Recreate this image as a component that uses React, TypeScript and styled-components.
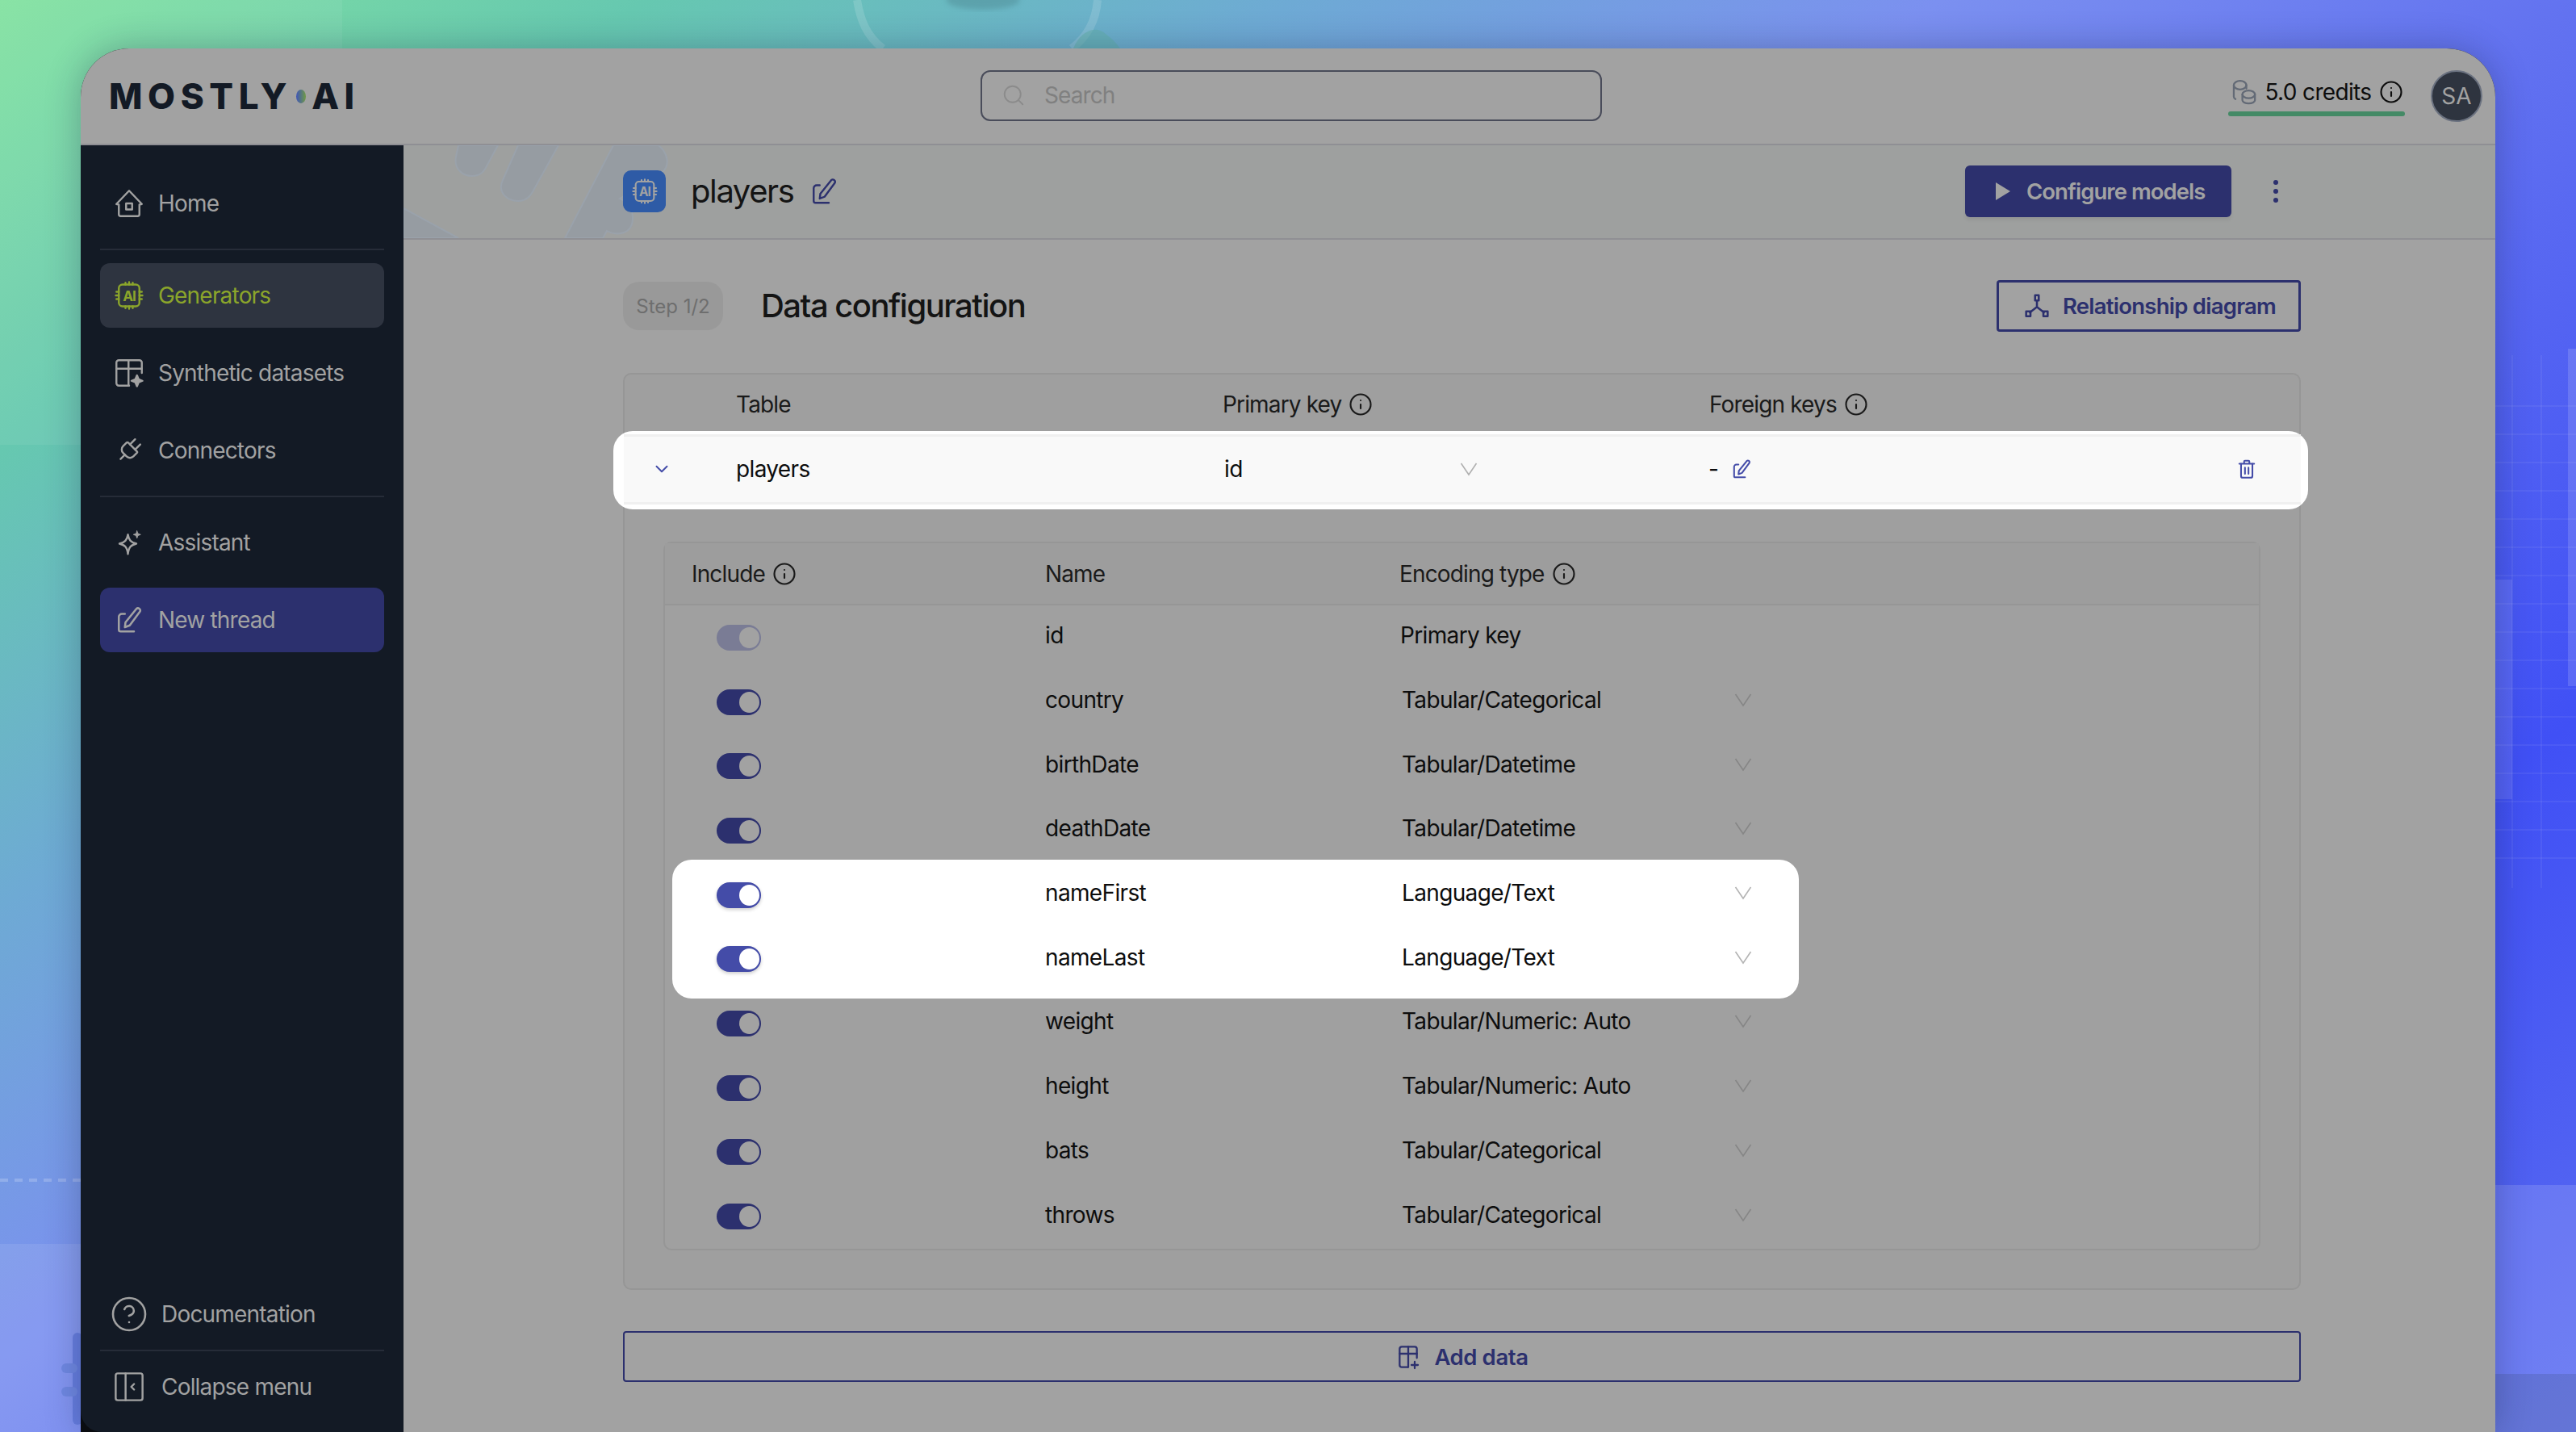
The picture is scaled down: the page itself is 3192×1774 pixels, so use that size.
import React from "react";
import styled, { createGlobalStyle } from "styled-components";
import { ChevronDown, CircleHelp, Info, Plug, Search } from "lucide-react";

const colors = {
  dim: "#a2a2a2",
  dimStrip: "#9ea09f",
  dimCard: "#9f9f9f",
  line: "#8f8f94",
  cardLine: "#969696",
  navy: "#2c306e",
  indigo: "#444ca8",
  sidebar: "#131a25",
  ink: "#141414",
};

const GlobalStyle = createGlobalStyle`
  html, body { margin: 0; padding: 0; }
  body {
    width: 3192px;
    height: 1774px;
    overflow: hidden;
    font-family: "Inter", "Liberation Sans", sans-serif;
    font-size: 28px;
    letter-spacing: -0.65px;
    color: ${colors.ink};
  }
  * { box-sizing: border-box; }
`;

const Page = styled.div`
  position: relative;
  width: 3192px;
  height: 1774px;
  padding: 60px 100px 0;
  background: linear-gradient(145deg, #82e2a0 0%, #66c8b0 14%, #6eaad4 28%, #7b90f0 42%, #6272f0 56%, #4050f5 78%, #5a6cf0 100%);
`;

const BackdropArt = styled.svg`
  position: absolute;
  inset: 0;
`;

const Window = styled.div`
  position: relative;
  width: 2992px;
  height: 1714px;
  display: flex;
  flex-direction: column;
  border-radius: 60px 60px 0 0;
  overflow: hidden;
  background: #0a0c10;
`;

const WindowShadow = styled.div`
  position: absolute;
  left: 100px;
  top: 60px;
  width: 2992px;
  height: 1714px;
  border-radius: 60px 60px 0 0;
  box-shadow: 0 0 44px rgba(20, 30, 60, 0.3);
`;

const TopBar = styled.header`
  height: 120px;
  flex: none;
  display: grid;
  grid-template-columns: 1115px 770px 1fr;
  align-items: center;
  background: ${colors.dim};
  border-bottom: 2px solid ${colors.line};
`;

const Logo = styled.div`
  display: flex;
  align-items: center;
  padding-left: 35px;
  font-size: 44px;
  line-height: 44px;
  font-weight: 800;
  letter-spacing: 6.6px;
  color: ${colors.sidebar};
`;

const LogoDot = styled.span`
  width: 12px;
  height: 17px;
  margin: 0 7px 0 5px;
  border-radius: 50%;
  background: linear-gradient(90deg, #3f55b8, #6f9a45);
`;

const SearchBox = styled.div`
  height: 63px;
  margin-top: -2px;
  display: flex;
  align-items: center;
  gap: 23px;
  padding-left: 24px;
  border: 2px solid #494c5a;
  border-radius: 12px;
  color: #808080;
  letter-spacing: -0.9px;
  svg { color: #8b8b8b; }
`;

const TopRight = styled.div`
  display: flex;
  justify-content: flex-end;
  align-items: center;
  gap: 32px;
  padding-right: 16px;
`;

const Credits = styled.div`
  width: 219px;
  display: flex;
  flex-direction: column;
  gap: 6px;
  margin-top: 2px;
`;

const CreditsRow = styled.div`
  height: 36px;
  display: flex;
  align-items: center;
  justify-content: space-between;
  padding: 0 2px;
  white-space: nowrap;
  font-size: 28px;
  color: #0d0d0d;
`;

const CoinsWrap = styled.span`
  display: flex;
  color: #636a76;
`;

const CreditsBar = styled.div`
  height: 6px;
  border-radius: 3px;
  background: #448a66;
`;

const Avatar = styled.div`
  width: 64px;
  height: 64px;
  display: flex;
  align-items: center;
  justify-content: center;
  border-radius: 50%;
  background: #2e343f;
  border: 2px solid #6b7280;
  color: ${colors.dim};
  font-size: 28px;
  letter-spacing: 0;
`;

const Body = styled.div`
  flex: 1;
  min-height: 0;
  display: flex;
`;

const Sidebar = styled.aside`
  width: 400px;
  flex: none;
  display: flex;
  flex-direction: column;
  gap: 16px;
  padding: 32px 24px 12px;
  background: ${colors.sidebar};
  border-bottom-left-radius: 26px;
  letter-spacing: -0.8px;
`;

const NavItem = styled.div<{ $tone?: "active" | "action" }>`
  height: 80px;
  flex: none;
  display: flex;
  align-items: center;
  gap: 18px;
  padding-left: 18px;
  border-radius: 12px;
  white-space: nowrap;
  color: ${({ $tone }) => ($tone === "active" ? "#8ba52b" : colors.dim)};
  background: ${({ $tone }) =>
    $tone === "active" ? "#2e3440" : $tone === "action" ? colors.navy : "transparent"};
`;

const NavDivider = styled.div`
  height: 2px;
  flex: none;
  background: #262c38;
`;

const SidebarFooter = styled.div`
  margin-top: auto;
  display: flex;
  flex-direction: column;
`;

const FooterItem = styled.div`
  height: 88px;
  display: flex;
  align-items: center;
  gap: 16px;
  padding-left: 12px;
  white-space: nowrap;
  color: ${colors.dim};
`;

const FooterIcon = styled.span`
  width: 48px;
  display: flex;
  justify-content: center;
`;

const Main = styled.main`
  flex: 1;
  min-width: 0;
  background: ${colors.dim};
`;

const SubHeader = styled.div`
  position: relative;
  height: 117px;
  display: flex;
  align-items: center;
  padding: 0 269px 2px 272px;
  background: ${colors.dimStrip};
  border-bottom: 2px solid ${colors.line};
`;

const SubHeaderArt = styled.svg`
  position: absolute;
  left: 0;
  top: 0;
`;

const AiBadge = styled.div`
  position: relative;
  width: 53px;
  height: 52px;
  display: flex;
  align-items: center;
  justify-content: center;
  border-radius: 10px;
  background: #2e5ba6;
  color: ${colors.dim};
`;

const PageTitle = styled.h1`
  position: relative;
  margin: 0 0 0 31px;
  font-size: 40px;
  line-height: 48px;
  font-weight: 400;
  letter-spacing: -1.4px;
  color: ${colors.ink};
`;

const TitleEdit = styled.span`
  position: relative;
  display: flex;
  margin-left: 20px;
  color: ${colors.navy};
`;

const PrimaryButton = styled.div`
  position: relative;
  width: 330px;
  height: 64px;
  margin-left: auto;
  display: flex;
  align-items: center;
  gap: 20px;
  padding-left: 38px;
  border-radius: 6px;
  background: ${colors.navy};
  box-shadow: 0 4px 4px rgba(0, 0, 0, 0.06);
  color: ${colors.dim};
  font-weight: 600;
  white-space: nowrap;
  font-size: 27.5px;
  letter-spacing: -0.95px;
`;

const Kebab = styled.div`
  position: relative;
  width: 6px;
  margin-left: 52px;
  display: flex;
  flex-direction: column;
  gap: 5px;
`;

const KebabDot = styled.span`
  width: 6px;
  height: 6px;
  border-radius: 50%;
  background: ${colors.navy};
`;

const Content = styled.div`
  padding: 50px 241px 0 272px;
`;

const StepRow = styled.div`
  height: 64px;
  display: flex;
  align-items: center;
`;

const StepBadge = styled.div`
  width: 124px;
  height: 60px;
  display: flex;
  align-items: center;
  justify-content: center;
  border-radius: 20px;
  background: #999999;
  color: #6e6e6e;
  font-size: 24px;
  letter-spacing: 0;
`;

const StepTitle = styled.h2`
  margin: 0 0 0 47px;
  font-size: 40px;
  line-height: 48px;
  font-weight: 500;
  letter-spacing: -1.5px;
  color: ${colors.ink};
`;

const OutlineButton = styled.div`
  width: 377px;
  height: 64px;
  margin-left: auto;
  display: flex;
  align-items: center;
  gap: 16px;
  padding-left: 31px;
  border: 3px solid ${colors.navy};
  border-radius: 4px;
  color: ${colors.navy};
  font-weight: 600;
  white-space: nowrap;
  font-size: 27.5px;
  letter-spacing: -0.75px;
`;

const TableCard = styled.section`
  height: 1136px;
  margin-top: 51px;
  border: 2px solid ${colors.cardLine};
  border-radius: 10px;
  background: ${colors.dimCard};
`;

const TableHead = styled.div`
  height: 70px;
  display: grid;
  grid-template-columns: 603px 603px 1fr;
  align-items: center;
  padding: 4px 0 0 138px;
  color: #1a1a1a;
`;

const HeadLabel = styled.div`
  display: flex;
  align-items: center;
  gap: 9px;
  letter-spacing: -0.85px;
`;

const Spotlight = styled.div`
  margin: 0 -11px 0 -14px;
  padding: 4px 9px 6px 13px;
  border-radius: 24px;
  background: #ffffff;
`;

const TableRow = styled.div`
  position: relative;
  height: 87px;
  display: grid;
  grid-template-columns: 139px 605px 600px 1fr 80px;
  align-items: center;
  padding-bottom: 2px;
  background: #f9f9f9;
  border-top: 3px solid #f0f0f0;
  border-bottom: 3px solid #f0f0f0;
  color: #0d0d0d;
`;

const Expander = styled.span`
  display: flex;
  justify-content: center;
  width: 94px;
  color: ${colors.indigo};
`;

const KeySelect = styled.div`
  width: 314px;
  display: flex;
  align-items: center;
  justify-content: space-between;
  color: #0d0d0d;
  svg { color: #b0b0b0; }
`;

const ForeignCell = styled.div`
  display: flex;
  align-items: center;
  gap: 16px;
  color: ${colors.indigo};
`;

const Dash = styled.span`
  color: #0d0d0d;
`;

const TrashCell = styled.span`
  display: flex;
  color: ${colors.indigo};
`;

const ColumnsTable = styled.div`
  margin: 40px 48px 0;
  border: 2px solid ${colors.cardLine};
  border-radius: 10px;
  background: #a0a0a0;
`;

const ColumnsHead = styled.div`
  height: 77px;
  display: grid;
  grid-template-columns: 438px 439px 1fr;
  align-items: center;
  padding-left: 33px;
  border-bottom: 2px solid ${colors.cardLine};
  background: #9d9d9d;
  color: #1a1a1a;
`;

const ColumnRow = styled.div`
  height: 79.7px;
  display: grid;
  grid-template-columns: 407px 440px 436px;
  align-items: center;
  padding: 0 0 5px 64px;
  color: #0d0d0d;
`;

const RowSpotlight = styled.div`
  width: 1396px;
  margin: -4px 0 -9px 9px;
  padding: 4px 0 9px;
  border-radius: 24px;
  background: #ffffff;
  ${ColumnRow} { margin-left: -9px; }
`;

const Toggle = styled.span<{ $tone: "locked" | "dim" | "lit" }>`
  position: relative;
  display: block;
  width: 55px;
  height: 32px;
  margin-top: 5px;
  border-radius: 16px;
  background: ${({ $tone }) =>
    $tone === "locked" ? "#7a7c95" : $tone === "lit" ? colors.indigo : colors.navy};
  box-shadow: ${({ $tone }) => ($tone === "lit" ? "0 2px 4px rgba(0, 0, 0, 0.2)" : "none")};
  &::after {
    content: "";
    position: absolute;
    top: 3px;
    right: 2px;
    width: 25px;
    height: 26px;
    border-radius: 50%;
    background: ${({ $tone }) => ($tone === "lit" ? "#ffffff" : colors.dim)};
  }
`;

const TypeCell = styled.div<{ $lit?: boolean }>`
  display: flex;
  align-items: center;
  justify-content: space-between;
  padding-left: 2px;
  white-space: nowrap;
  svg { color: ${({ $lit }) => ($lit ? "#b4b4b4" : "#868686")}; }
`;

const PlainType = styled.div`
  white-space: nowrap;
`;

const AddData = styled.div`
  height: 63px;
  margin-top: 51px;
  display: flex;
  align-items: center;
  justify-content: center;
  gap: 16px;
  border: 2px solid ${colors.navy};
  border-radius: 4px;
  color: ${colors.navy};
  font-weight: 600;
  font-size: 27.5px;
  letter-spacing: -0.4px;
`;

type IconProps = { size?: number };

const Stroke = ({ size = 36, width = 1.6, children }: IconProps & { width?: number; children: React.ReactNode }) => (
  <svg width={size} height={size} viewBox="0 0 24 24" fill="none" stroke="currentColor" strokeWidth={width} strokeLinecap="round" strokeLinejoin="round">
    {children}
  </svg>
);

const HomeIcon = () => (
  <Stroke>
    <path d="M12 1.5 L22.5 12.5 L20.5 13 V21 a1.5 1.5 0 0 1-1.5 1.5 H5 A1.5 1.5 0 0 1 3.5 21 V13 L1.5 12.5 Z" />
    <rect x="9.5" y="12" width="5" height="5" />
  </Stroke>
);

const ChipIcon = ({ size = 36 }: IconProps) => (
  <svg width={size} height={size} viewBox="0 0 24 24" fill="none" stroke="currentColor" strokeWidth="1.6" strokeLinecap="round">
    <rect x="3.5" y="3" width="17" height="18" rx="3" />
    <path d="M9 1.5V3M12 1V3M15 1.5V3M9 21v1.5M12 21v2M15 21v1.5M1.5 9H3.5M1 12h2.5M1.5 15h2M20.5 9h2M20.5 12H23M20.5 15h2" />
    <text x="12" y="16.5" textAnchor="middle" fontFamily="Inter, sans-serif" fontSize="11.5" fontWeight="700" stroke="none" fill="currentColor">AI</text>
  </svg>
);

const DatasetIcon = () => (
  <Stroke>
    <path d="M12 22.5H3.5a2 2 0 0 1-2-2V3.5a2 2 0 0 1 2-2h17a2 2 0 0 1 2 2V12" />
    <path d="M1.5 8.5h21M11.5 1.5v21" />
    <path d="M18.5 14 L19.8 17.2 L23 18.5 L19.8 19.8 L18.5 23 L17.2 19.8 L14 18.5 L17.2 17.2 Z" fill="currentColor" />
  </Stroke>
);

const SparkleIcon = () => (
  <Stroke>
    <path d="M11 5.5 C11.7 10 13.5 12 18 13 C13.5 14 11.7 16 11 21.5 C10.3 16 8.5 14 4 13 C8.5 12 10.3 10 11 5.5 Z" />
    <path d="M18.5 2.5 L19.3 4.7 L21.5 5.5 L19.3 6.3 L18.5 8.5 L17.7 6.3 L15.5 5.5 L17.7 4.7 Z" fill="currentColor" strokeWidth="0.6" />
  </Stroke>
);

const PenBoxIcon = ({ size = 36, width = 1.7 }: IconProps & { width?: number }) => (
  <Stroke size={size} width={width}>
    <path d="M8.5 7H6a2.5 2.5 0 0 0-2.5 2.5V20A1.5 1.5 0 0 0 5 21.5h11" />
    <path d="M18 2.8a1.9 1.9 0 0 1 3 2.2l-8.5 11.5L8.5 18l.5-4Z" />
  </Stroke>
);

const PanelIcon = () => (
  <Stroke size={42} width={1.4}>
    <rect x="2.5" y="2.5" width="19" height="19" rx="1.5" />
    <path d="M9.5 2.5v19M15.5 10l-2 2 2 2" />
  </Stroke>
);

const CoinsIcon = () => (
  <Stroke size={34} width={1.6}>
    <ellipse cx="9" cy="6" rx="5.5" ry="3.8" />
    <path d="M3.5 6v10c0 1 .5 1.6 1.5 2.2M14.5 6v3" />
    <ellipse cx="16.5" cy="14" rx="5.5" ry="3.4" />
    <path d="M11 14v5c0 1.6 2.4 3 5.5 3s5.5-1.4 5.5-3v-5" />
  </Stroke>
);

const DiagramIcon = () => (
  <Stroke size={32} width={1.9}>
    <rect x="10.3" y="2" width="3.4" height="5" />
    <rect x="2" y="17" width="4" height="4.5" />
    <rect x="18" y="17" width="4" height="4.5" />
    <path d="M12 7v6M12 13l-6.5 5M12 13l6.5 5" />
  </Stroke>
);

const TrashIcon = () => (
  <Stroke size={26} width={1.9}>
    <path d="M3.5 6h17M9 6V3.5A1 1 0 0 1 10 2.5h4a1 1 0 0 1 1 1V6" />
    <path d="M5.5 6v14a2 2 0 0 0 2 2h9a2 2 0 0 0 2-2V6M10 10.5v7M14 10.5v7" />
  </Stroke>
);

const TablePlusIcon = () => (
  <Stroke size={32} width={1.7}>
    <path d="M11.5 21.5H6a2 2 0 0 1-2-2V4.5a2 2 0 0 1 2-2h12a2 2 0 0 1 2 2V13" />
    <path d="M4 9h16M12 2.5v19M18 16.5v6M15 19.5h6" />
  </Stroke>
);

const PlayIcon = () => (
  <svg width="18" height="22" viewBox="0 0 18 22">
    <path d="M0 0 L18 11 L0 22 Z" fill="currentColor" />
  </svg>
);

const InfoMark = ({ size = 30 }: IconProps) => <Info size={size} strokeWidth={1.7} />;

const LightChevron = () => (
  <svg width="22" height="18" viewBox="0 0 22 18" fill="none" stroke="currentColor" strokeWidth="1.6">
    <path d="M1.5 2 L11 16 L20.5 2" />
  </svg>
);

type Column = { name: string; type: string };

const before: Column[] = [
  { name: "country", type: "Tabular/Categorical" },
  { name: "birthDate", type: "Tabular/Datetime" },
  { name: "deathDate", type: "Tabular/Datetime" },
];

const lit: Column[] = [
  { name: "nameFirst", type: "Language/Text" },
  { name: "nameLast", type: "Language/Text" },
];

const after: Column[] = [
  { name: "weight", type: "Tabular/Numeric: Auto" },
  { name: "height", type: "Tabular/Numeric: Auto" },
  { name: "bats", type: "Tabular/Categorical" },
  { name: "throws", type: "Tabular/Categorical" },
];

const gridLines = Array.from({ length: 17 }, (_, i) => 503 + i * 35);

const ColumnLine = ({ column, highlighted }: { column: Column; highlighted?: boolean }) => (
  <ColumnRow>
    <Toggle $tone={highlighted ? "lit" : "dim"} />
    <div>{column.name}</div>
    <TypeCell $lit={highlighted}>
      {column.type}
      <LightChevron />
    </TypeCell>
  </ColumnRow>
);

export default function App() {
  return (
    <Page>
      <GlobalStyle />
      <BackdropArt width="3192" height="1774" viewBox="0 0 3192 1774" aria-hidden="true">
        <defs>
          <filter id="soft"><feGaussianBlur stdDeviation="3" /></filter>
        </defs>
        <rect x="0" y="0" width="424" height="551" fill="#ffffff" opacity="0.06" />
        <rect x="0" y="1541" width="100" height="233" fill="#ffffff" opacity="0.09" />
        <rect x="3092" y="1702" width="100" height="72" fill="#7f8a9c" opacity="0.3" />
        <rect x="3092" y="1468" width="100" height="234" fill="#ffffff" opacity="0.14" />
        <rect x="3092" y="718" width="21" height="272" fill="#ffffff" opacity="0.1" />
        <rect x="3182" y="432" width="10" height="418" fill="#ffffff" opacity="0.14" />
        <g stroke="#ffffff" strokeOpacity="0.06" strokeWidth="2">
          {gridLines.map((y) => (
            <path key={y} d={`M3092 ${y}h100`} />
          ))}
          <path d="M3113 440V1100M3149 440V1100" />
        </g>
        <path d="M0 1462h100" stroke="#ffffff" strokeOpacity="0.2" strokeWidth="4" strokeDasharray="10 8" />
        <path d="M1062 0c4 25 12 45 32 60M1360 0c-2 25-12 45-32 60" stroke="#ffffff" strokeOpacity="0.14" strokeWidth="10" fill="none" />
        <path d="M1330 60c8-20 26-30 40-18 8 6 14 12 18 18Z" fill="#5fb0a8" opacity="0.5" />
        <ellipse cx="1218" cy="0" rx="46" ry="12" fill="#4f8c96" opacity="0.5" filter="url(#soft)" />
        <rect x="90" y="1651" width="12" height="114" rx="6" fill="#5f78dc" opacity="0.8" />
        <rect x="76" y="1689" width="20" height="12" rx="6" fill="#6f88e2" />
        <rect x="76" y="1718" width="20" height="12" rx="6" fill="#6f88e2" />
      </BackdropArt>
      <WindowShadow />
      <Window>
        <TopBar>
          <Logo>
            MOSTLY
            <LogoDot />
            AI
          </Logo>
          <SearchBox>
            <Search size={30} strokeWidth={1.5} />
            Search
          </SearchBox>
          <TopRight>
            <Credits>
              <CreditsRow>
                <CoinsWrap>
                  <CoinsIcon />
                </CoinsWrap>
                5.0 credits
                <InfoMark />
              </CreditsRow>
              <CreditsBar />
            </Credits>
            <Avatar>SA</Avatar>
          </TopRight>
        </TopBar>
        <Body>
          <Sidebar>
            <NavItem>
              <HomeIcon />
              Home
            </NavItem>
            <NavDivider />
            <NavItem $tone="active">
              <ChipIcon />
              Generators
            </NavItem>
            <NavItem>
              <DatasetIcon />
              Synthetic datasets
            </NavItem>
            <NavItem>
              <Plug size={36} strokeWidth={1.6} style={{ transform: "rotate(45deg)" }} />
              Connectors
            </NavItem>
            <NavDivider />
            <NavItem>
              <SparkleIcon />
              Assistant
            </NavItem>
            <NavItem $tone="action">
              <PenBoxIcon />
              New thread
            </NavItem>
            <SidebarFooter>
              <FooterItem>
                <FooterIcon>
                  <CircleHelp size={48} strokeWidth={1.3} />
                </FooterIcon>
                Documentation
              </FooterItem>
              <NavDivider />
              <FooterItem>
                <FooterIcon>
                  <PanelIcon />
                </FooterIcon>
                Collapse menu
              </FooterItem>
            </SidebarFooter>
          </Sidebar>
          <Main>
            <SubHeader>
              <SubHeaderArt width="400" height="115" viewBox="0 0 400 115" aria-hidden="true">
                <g fill="#969ca2" stroke="#9aa2ab" strokeWidth="2">
                  <path d="M68 0 L65 14 C62 30 74 38 85 38 C96 38 100 32 104 24 L117 0 Z" />
                  <path d="M142 0 L123 43 C116 58 128 69 142 69 C153 69 158 62 162 54 L192 0 Z" />
                  <path d="M260 0 L200 115 L247 115 L252 106 C262 112 284 112 284 90 C284 80 278 70 268 66 L320 34 C332 24 326 8 316 0 Z" />
                  <path d="M0 78 L68 115 L0 115 Z" />
                </g>
              </SubHeaderArt>
              <AiBadge>
                <ChipIcon size={32} />
              </AiBadge>
              <PageTitle>players</PageTitle>
              <TitleEdit>
                <PenBoxIcon size={36} width={1.6} />
              </TitleEdit>
              <PrimaryButton>
                <PlayIcon />
                Configure models
              </PrimaryButton>
              <Kebab>
                <KebabDot />
                <KebabDot />
                <KebabDot />
              </Kebab>
            </SubHeader>
            <Content>
              <StepRow>
                <StepBadge>Step 1/2</StepBadge>
                <StepTitle>Data configuration</StepTitle>
                <OutlineButton>
                  <DiagramIcon />
                  Relationship diagram
                </OutlineButton>
              </StepRow>
              <TableCard>
                <TableHead>
                  <HeadLabel>Table</HeadLabel>
                  <HeadLabel>
                    Primary key
                    <InfoMark />
                  </HeadLabel>
                  <HeadLabel>
                    Foreign keys
                    <InfoMark />
                  </HeadLabel>
                </TableHead>
                <Spotlight>
                  <TableRow>
                    <Expander>
                      <ChevronDown size={26} strokeWidth={1.8} />
                    </Expander>
                    <div>players</div>
                    <KeySelect>
                      id
                      <LightChevron />
                    </KeySelect>
                    <ForeignCell>
                      <Dash>-</Dash>
                      <PenBoxIcon size={26} width={1.9} />
                    </ForeignCell>
                    <TrashCell>
                      <TrashIcon />
                    </TrashCell>
                  </TableRow>
                </Spotlight>
                <ColumnsTable>
                  <ColumnsHead>
                    <HeadLabel>
                      Include
                      <InfoMark />
                    </HeadLabel>
                    <HeadLabel>Name</HeadLabel>
                    <HeadLabel>
                      Encoding type
                      <InfoMark />
                    </HeadLabel>
                  </ColumnsHead>
                  <ColumnRow>
                    <Toggle $tone="locked" />
                    <div>id</div>
                    <PlainType>Primary key</PlainType>
                  </ColumnRow>
                  {before.map((column) => (
                    <ColumnLine key={column.name} column={column} />
                  ))}
                  <RowSpotlight>
                    {lit.map((column) => (
                      <ColumnLine key={column.name} column={column} highlighted />
                    ))}
                  </RowSpotlight>
                  {after.map((column) => (
                    <ColumnLine key={column.name} column={column} />
                  ))}
                </ColumnsTable>
              </TableCard>
              <AddData>
                <TablePlusIcon />
                Add data
              </AddData>
            </Content>
          </Main>
        </Body>
      </Window>
    </Page>
  );
}
